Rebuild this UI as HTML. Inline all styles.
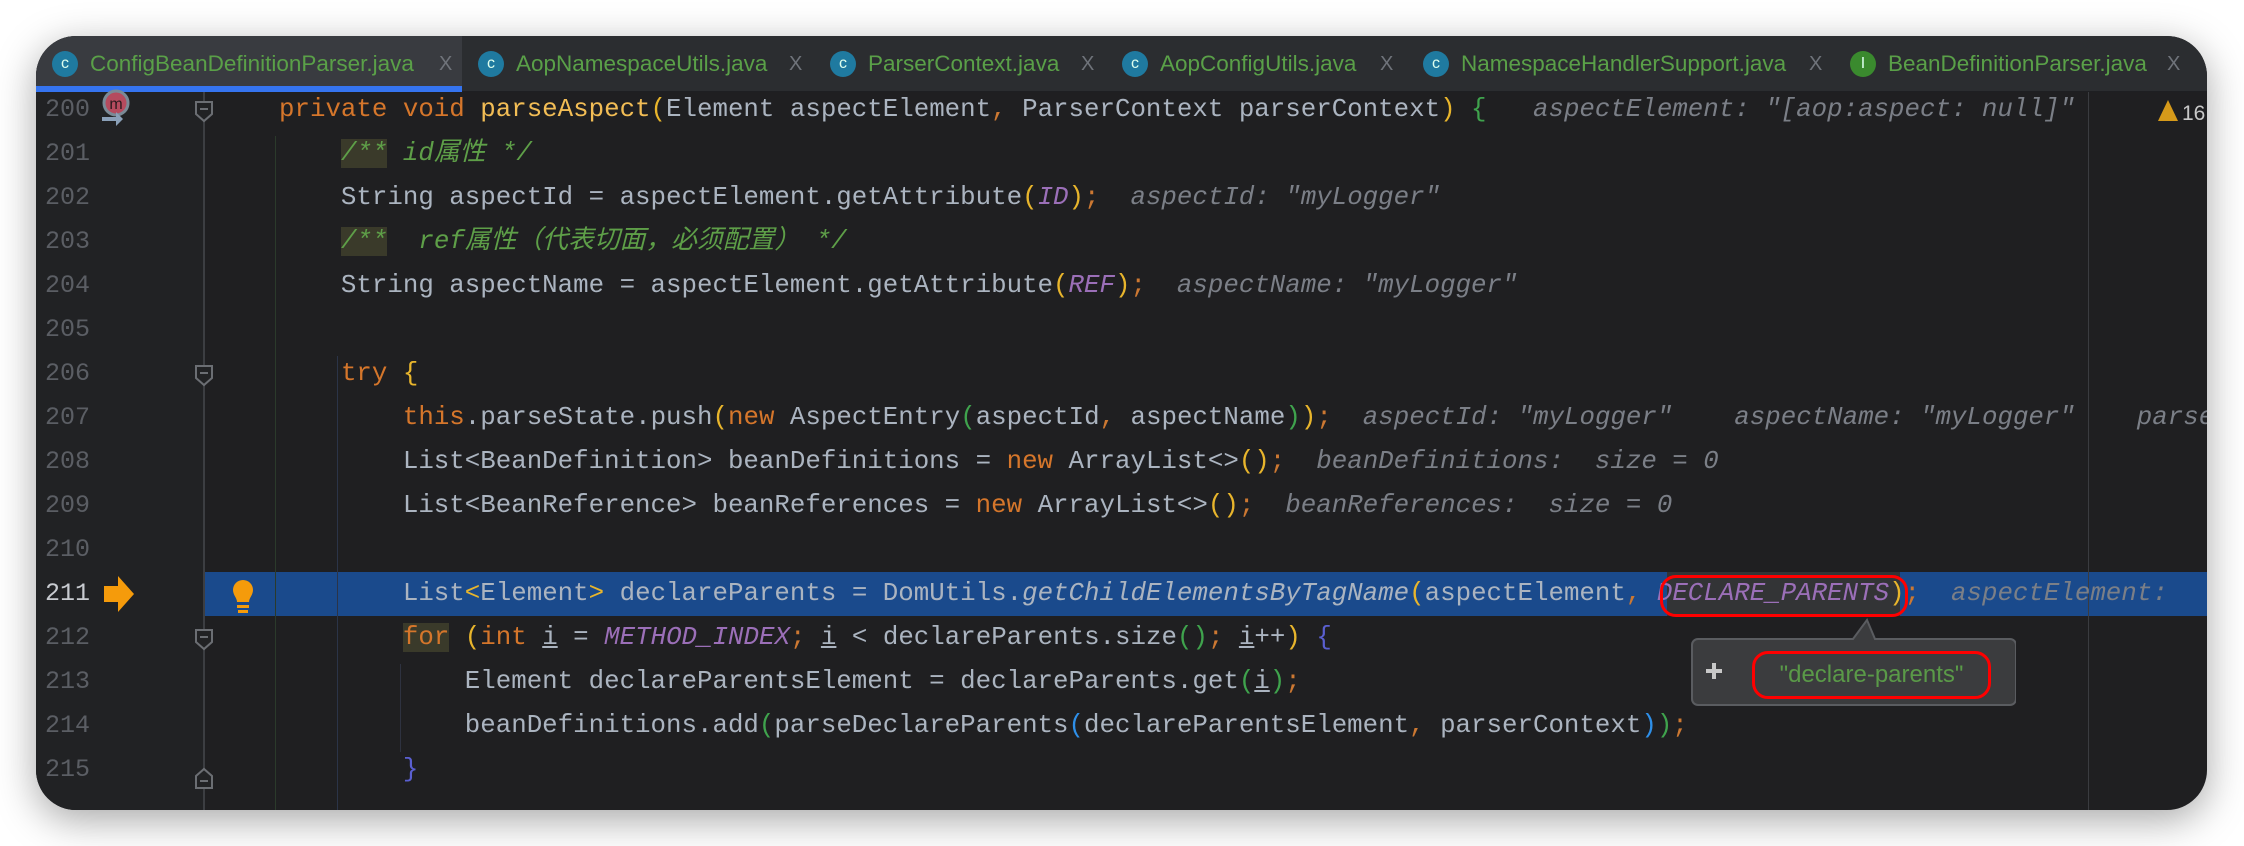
<!DOCTYPE html>
<html><head><meta charset="utf-8"><style>
*{margin:0;padding:0;box-sizing:border-box}
body{width:2244px;height:846px;background:#fff;overflow:hidden;position:relative;font-family:"Liberation Mono","Noto Sans CJK SC",monospace}
#win{position:absolute;left:36px;top:36px;width:2171px;height:774px;border-radius:40px;overflow:hidden;background:#1f1f21;box-shadow:0 10px 40px rgba(0,0,0,.35)}
#tabs{position:absolute;left:0;top:0;width:100%;height:56px;background:#2b2d30;border-bottom:1px solid #1e1f22}
.tab{position:absolute;top:0;height:56px;font-family:"Liberation Sans",sans-serif;font-size:22.5px;color:#5aa048;line-height:56px;white-space:nowrap}
.ic{position:absolute;top:15px;width:26px;height:26px;border-radius:50%;background:#1f7aa0;color:#dfe;font-size:16px;line-height:26px;text-align:center}
.x{position:absolute;color:#6f737a;font-size:20px}
#gut{position:absolute;left:0;top:56px;width:167px;height:720px;background:#212224}
.ln{position:absolute;left:9px;width:50px;font-size:25px;color:#5b5e64;height:44px;line-height:44px}
.row{position:absolute;left:243px;height:44px;line-height:44px;font-size:25.8px;white-space:pre;color:#abb4c0}
.k{color:#d5762b}.f{color:#f2bd55}.c{color:#5e9f48;font-style:italic}.h{color:#7b7f87;font-style:italic}.p{color:#9b6fb8;font-style:italic}
.y{color:#e8b52c}.g{color:#3fa34d}.b{color:#2e8fe8}.bb{color:#5a5fd0}.s{color:#cc7832}
.cb{background:#3a3a2a}
.u{text-decoration:underline}
</style></head><body>
<div id="win">
<div id="tabs">
 <div style="position:absolute;left:0;top:0;width:426px;height:56px;background:#393b40"></div>
 <div style="position:absolute;left:0;top:50px;width:426px;height:6px;background:#3574f0"></div>
 <div class="tab" style="left:16px"><span class="ic" style="left:0">c</span><span style="position:absolute;left:38px">ConfigBeanDefinitionParser.java</span><span class="x" style="left:387px">X</span></div>
 <div class="tab" style="left:442px"><span class="ic" style="left:0">c</span><span style="position:absolute;left:38px">AopNamespaceUtils.java</span><span class="x" style="left:311px">X</span></div>
 <div class="tab" style="left:794px"><span class="ic" style="left:0">c</span><span style="position:absolute;left:38px">ParserContext.java</span><span class="x" style="left:251px">X</span></div>
 <div class="tab" style="left:1086px"><span class="ic" style="left:0">c</span><span style="position:absolute;left:38px">AopConfigUtils.java</span><span class="x" style="left:258px">X</span></div>
 <div class="tab" style="left:1387px"><span class="ic" style="left:0">c</span><span style="position:absolute;left:38px">NamespaceHandlerSupport.java</span><span class="x" style="left:386px">X</span></div>
 <div class="tab" style="left:1814px"><span class="ic" style="left:0;background:#3a8a2e">I</span><span style="position:absolute;left:38px">BeanDefinitionParser.java</span><span class="x" style="left:317px">X</span></div>
</div>
<div id="gut"></div>
<div style="position:absolute;left:167px;top:536px;width:2010px;height:44px;background:#1a4a8c"></div>
<div style="position:absolute;left:167px;top:56px;width:2px;height:720px;background:#3c3e42"></div>
<div style="position:absolute;left:239px;top:100px;width:1px;height:680px;background:#2b3a2b"></div>
<div style="position:absolute;left:301px;top:320px;width:1px;height:460px;background:#2b3448"></div>
<div style="position:absolute;left:364px;top:628px;width:1px;height:88px;background:#2e3240"></div>
<div style="position:absolute;left:2052px;top:56px;width:1px;height:720px;background:#3a3c40"></div>
<svg style="position:absolute;left:0;top:0" width="2171" height="774">
 <g fill="#212224" stroke="#6b6e73" stroke-width="2">
  <path d="M160 66h16v12l-8 7l-8-7z"/><path d="M164 73h8"/>
  <path d="M160 330h16v12l-8 7l-8-7z"/><path d="M164 337h8"/>
  <path d="M160 594h16v12l-8 7l-8-7z"/><path d="M164 601h8"/>
  <path d="M160 752h16v-12l-8-7l-8 7z"/><path d="M164 745h8"/>
 </g>
 <circle cx="80" cy="67" r="12" fill="#b54b5e" stroke="#7a8a96" stroke-width="3"/>
 <text x="80" y="73" font-size="16" fill="#2a1a1e" text-anchor="middle" font-family="Liberation Sans">m</text>
 <path d="M66 81h14v-5l7 7l-7 7v-5h-14z" fill="#8aa0b8"/>
 <path d="M68 550h14v-10l16 18l-16 18v-10h-14z" fill="#f59b0b"/>
 <path d="M207 544a10 10 0 0 1 10 10c0 5-4 8-4 12h-12c0-4-4-7-4-12a10 10 0 0 1 10-10z" fill="#f59b0b"/>
 <rect x="201" y="569" width="12" height="3" fill="#f59b0b"/><rect x="202" y="574" width="10" height="3" fill="#f59b0b"/>
 <path d="M2132 64l-10 21h20z" fill="#d69a1a"/><text x="2146" y="84" font-size="21" fill="#c8c8c8" font-family="Liberation Sans">16</text>
</svg>
<div class="ln" style="top:52px">200</div>
<div class="ln" style="top:96px">201</div>
<div class="ln" style="top:140px">202</div>
<div class="ln" style="top:184px">203</div>
<div class="ln" style="top:228px">204</div>
<div class="ln" style="top:272px">205</div>
<div class="ln" style="top:316px">206</div>
<div class="ln" style="top:360px">207</div>
<div class="ln" style="top:404px">208</div>
<div class="ln" style="top:448px">209</div>
<div class="ln" style="top:492px">210</div>
<div class="ln" style="top:536px;color:#c8cbd0">211</div>
<div class="ln" style="top:580px">212</div>
<div class="ln" style="top:624px">213</div>
<div class="ln" style="top:668px">214</div>
<div class="ln" style="top:712px">215</div>

<div class="row" style="top:52px"><span class="k">private void </span><span class="f">parseAspect</span><span class="y">(</span>Element aspectElement<span class="s">,</span> ParserContext parserContext<span class="y">)</span> <span class="g">{</span>   <span class="h">aspectElement: "[aop:aspect: null]"</span></div>
<div class="row" style="top:96px">    <span class="c"><span class="cb">/**</span> id属性 */</span></div>
<div class="row" style="top:140px">    String aspectId = aspectElement.getAttribute<span class="y">(</span><span class="p">ID</span><span class="y">)</span><span class="s">;</span>  <span class="h">aspectId: "myLogger"</span></div>
<div class="row" style="top:184px">    <span class="c"><span class="cb">/**</span>  ref属性（代表切面，必须配置） */</span></div>
<div class="row" style="top:228px">    String aspectName = aspectElement.getAttribute<span class="y">(</span><span class="p">REF</span><span class="y">)</span><span class="s">;</span>  <span class="h">aspectName: "myLogger"</span></div>
<div class="row" style="top:316px">    <span class="k">try</span> <span class="y">{</span></div>
<div class="row" style="top:360px">        <span class="k">this</span>.parseState.push<span class="y">(</span><span class="k">new</span> AspectEntry<span class="g">(</span>aspectId<span class="s">,</span> aspectName<span class="g">)</span><span class="y">)</span><span class="s">;</span>  <span class="h">aspectId: "myLogger"    aspectName: "myLogger"    parserContext</span></div>
<div class="row" style="top:404px">        List&lt;BeanDefinition&gt; beanDefinitions = <span class="k">new</span> ArrayList&lt;&gt;<span class="y">()</span><span class="s">;</span>  <span class="h">beanDefinitions:  size = 0</span></div>
<div class="row" style="top:448px">        List&lt;BeanReference&gt; beanReferences = <span class="k">new</span> ArrayList&lt;&gt;<span class="y">()</span><span class="s">;</span>  <span class="h">beanReferences:  size = 0</span></div>
<div style="position:absolute;left:1631px;top:536px;width:233px;height:44px;background:#333436"></div>
<div class="row" style="top:536px">        List<span class="y">&lt;</span>Element<span class="y">&gt;</span> declareParents = DomUtils.<span style="font-style:italic">getChildElementsByTagName</span><span class="y">(</span>aspectElement<span class="s">,</span> <span class="p">DECLARE_PARENTS</span><span class="y">)</span><span class="s">;</span>  <span class="h">aspectElement: </span></div>
<div class="row" style="top:580px">        <span class="k cb">for</span> <span class="y">(</span><span class="k">int</span> <span class="u">i</span> = <span class="p">METHOD_INDEX</span><span class="s">;</span> <span class="u">i</span> &lt; declareParents.size<span class="g">()</span><span class="s">;</span> <span class="u">i</span>++<span class="y">)</span> <span class="bb">{</span></div>
<div class="row" style="top:624px">            Element declareParentsElement = declareParents.get<span class="g">(</span><span class="u">i</span><span class="g">)</span><span class="s">;</span></div>
<div class="row" style="top:668px">            beanDefinitions.add<span class="g">(</span>parseDeclareParents<span class="b">(</span>declareParentsElement<span class="s">,</span> parserContext<span class="b">)</span><span class="g">)</span><span class="s">;</span></div>
<div class="row" style="top:712px">        <span class="bb">}</span></div>

<div style="position:absolute;left:1624px;top:539px;width:248px;height:42px;border:3px solid #f00;border-radius:16px"></div>
<svg style="position:absolute;left:1650px;top:580px" width="330" height="100">
 <path d="M12 23H167L181 4L189 23H324a6 6 0 0 1 6 6v54a6 6 0 0 1-6 6H12a6 6 0 0 1-6-6V29a6 6 0 0 1 6-6z" fill="#3b3c3e" stroke="#5a5c60" stroke-width="2"/>
 <path d="M20 55h16M28 47v16" stroke="#c8c8c8" stroke-width="4"/>
</svg>
<div style="position:absolute;left:1716px;top:615px;width:239px;height:48px;border:3px solid #f00;border-radius:16px;font-family:'Liberation Sans',sans-serif;font-size:24px;color:#5a9a48;line-height:42px;text-align:center">"declare-parents"</div>
</div>
</body></html>
